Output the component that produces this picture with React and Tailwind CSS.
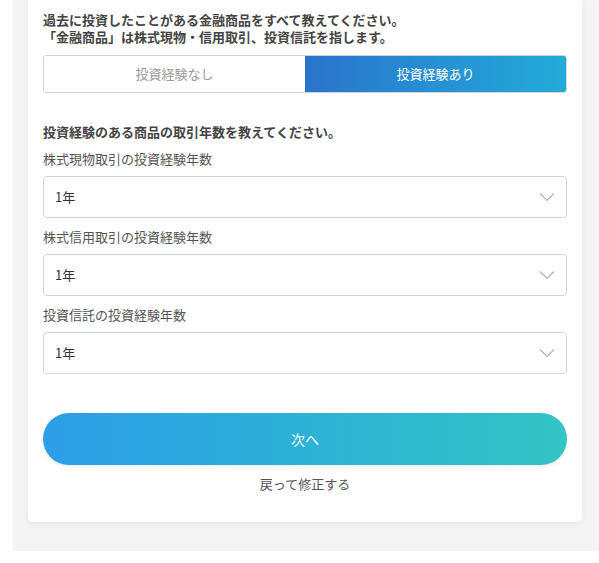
import React, { useState } from 'react';

const font = { fontFamily: '"Noto Sans CJK JP", "Noto Sans", sans-serif' };

function Chevron() {
  return (
    <svg width="16" height="10" viewBox="0 0 16 10" fill="none" className="absolute right-[11px] top-1/2 -translate-y-1/2">
      <path d="M1 1.5 L8 8.5 L15 1.5" stroke="#a9b4c2" strokeWidth="1.2" />
    </svg>
  );
}

function YearSelect({ label }) {
  return (
    <div>
      <div className="text-[13px] leading-[18px] text-[#555] mb-[8px]">{label}</div>
      <div className="relative h-[42px] border border-[#cfd7e0] rounded-[4px] bg-white flex items-center pl-[11px] text-[13px] text-[#333]">
        1年
        <Chevron />
      </div>
    </div>
  );
}

export default function App() {
  const [experienced, setExperienced] = useState(true);

  return (
    <div className="bg-white min-h-[563px]" style={font}>
      <div className="ml-[13px] bg-[#f4f4f4] pb-[29px]">
        <div className="ml-[15px] w-[554px] bg-white rounded-b-[5px] shadow-[0_2px_6px_rgba(0,0,0,0.06)] px-[15px] pt-[11px] pb-[29px]">
          <p className="text-[13px] leading-[17px] font-bold text-[#444]">
            過去に投資したことがある金融商品をすべて教えてください。
            <br />
            「金融商品」は株式現物・信用取引、投資信託を指します。
          </p>
          <div className="mt-[10px] flex h-[38px] rounded-[3px] overflow-hidden border border-[#d6d6d6]">
            <button
              onClick={() => setExperienced(false)}
              className={`flex-1 text-[13px] ${experienced ? 'bg-white text-[#9a9a9a]' : 'bg-gradient-to-r from-[#2a74cc] to-[#22abd8] text-white'}`}
            >
              投資経験なし
            </button>
            <button
              onClick={() => setExperienced(true)}
              className={`flex-1 text-[13px] ${experienced ? 'bg-gradient-to-r from-[#2a74cc] to-[#22abd8] text-white' : 'bg-white text-[#9a9a9a]'}`}
            >
              投資経験あり
            </button>
          </div>

          <p className="mt-[30px] text-[13px] leading-[18px] font-bold text-[#444]">
            投資経験のある商品の取引年数を教えてください。
          </p>
          <div className="mt-[9px] flex flex-col gap-[10px]">
            <YearSelect label="株式現物取引の投資経験年数" />
            <YearSelect label="株式信用取引の投資経験年数" />
            <YearSelect label="投資信託の投資経験年数" />
          </div>

          <button className="mt-[39px] w-full h-[52px] rounded-full bg-gradient-to-r from-[#2d9de7] to-[#33c4c3] text-white text-[14px] shadow-[0_1px_4px_rgba(0,0,0,0.1)]">
            次へ
          </button>
          <div className="mt-[10px] text-center text-[13px] leading-[18px] text-[#555]">戻って修正する</div>
        </div>
      </div>
    </div>
  );
}
